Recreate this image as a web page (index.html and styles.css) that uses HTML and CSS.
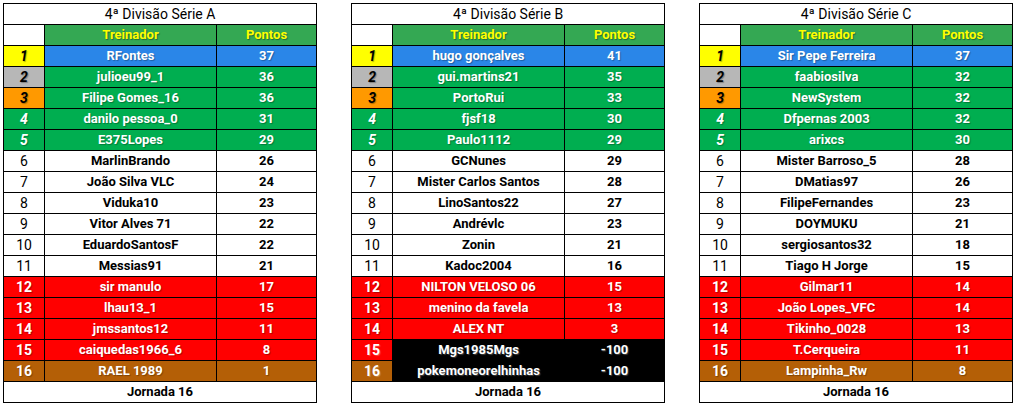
FILE: index.html
```html
<!DOCTYPE html>
<html lang="pt">
<head>
<meta charset="utf-8">
<title>4ª Divisão</title>
<link rel="stylesheet" href="styles.css">
</head>
<body>
<div class="wrap">
  <table class="league">
    <colgroup><col class="c-rank"><col class="c-name"><col class="c-pts"></colgroup>
    <tr><td colspan="3" class="title">4ª Divisão Série A</td></tr>
    <tr class="head"><td class="blank"></td><td>Treinador</td><td>Pontos</td></tr>
    <tr class="blue"><td class="r r1">1</td><td>RFontes</td><td>37</td></tr>
    <tr class="green"><td class="r r2">2</td><td>julioeu99_1</td><td>36</td></tr>
    <tr class="green"><td class="r r3">3</td><td>Filipe Gomes_16</td><td>36</td></tr>
    <tr class="green"><td class="r r4">4</td><td>danilo pessoa_0</td><td>31</td></tr>
    <tr class="green"><td class="r r4">5</td><td>E375Lopes</td><td>29</td></tr>
    <tr class="white"><td class="r">6</td><td>MarlinBrando</td><td>26</td></tr>
    <tr class="white"><td class="r">7</td><td>João Silva VLC</td><td>24</td></tr>
    <tr class="white"><td class="r">8</td><td>Viduka10</td><td>23</td></tr>
    <tr class="white"><td class="r">9</td><td>Vitor Alves 71</td><td>22</td></tr>
    <tr class="white"><td class="r">10</td><td>EduardoSantosF</td><td>22</td></tr>
    <tr class="white"><td class="r">11</td><td>Messias91</td><td>21</td></tr>
    <tr class="red"><td class="r">12</td><td>sir manulo</td><td>17</td></tr>
    <tr class="red"><td class="r">13</td><td>lhau13_1</td><td>15</td></tr>
    <tr class="red"><td class="r">14</td><td>jmssantos12</td><td>11</td></tr>
    <tr class="red"><td class="r">15</td><td>caiquedas1966_6</td><td>8</td></tr>
    <tr class="brown"><td class="r">16</td><td>RAEL 1989</td><td>1</td></tr>
    <tr><td colspan="3" class="foot">Jornada 16</td></tr>
  </table>

  <table class="league">
    <colgroup><col class="c-rank"><col class="c-name"><col class="c-pts"></colgroup>
    <tr><td colspan="3" class="title">4ª Divisão Série B</td></tr>
    <tr class="head"><td class="blank"></td><td>Treinador</td><td>Pontos</td></tr>
    <tr class="blue"><td class="r r1">1</td><td>hugo gonçalves</td><td>41</td></tr>
    <tr class="green"><td class="r r2">2</td><td>gui.martins21</td><td>35</td></tr>
    <tr class="green"><td class="r r3">3</td><td>PortoRui</td><td>33</td></tr>
    <tr class="green"><td class="r r4">4</td><td>fjsf18</td><td>30</td></tr>
    <tr class="green"><td class="r r4">5</td><td>Paulo1112</td><td>29</td></tr>
    <tr class="white"><td class="r">6</td><td>GCNunes</td><td>29</td></tr>
    <tr class="white"><td class="r">7</td><td>Mister Carlos Santos</td><td>28</td></tr>
    <tr class="white"><td class="r">8</td><td>LinoSantos22</td><td>27</td></tr>
    <tr class="white"><td class="r">9</td><td>Andrévlc</td><td>23</td></tr>
    <tr class="white"><td class="r">10</td><td>Zonin</td><td>21</td></tr>
    <tr class="white"><td class="r">11</td><td>Kadoc2004</td><td>16</td></tr>
    <tr class="red"><td class="r">12</td><td>NILTON VELOSO 06</td><td>15</td></tr>
    <tr class="red"><td class="r">13</td><td>menino da favela</td><td>13</td></tr>
    <tr class="red"><td class="r">14</td><td>ALEX NT</td><td>3</td></tr>
    <tr class="black red-rank"><td class="r">15</td><td>Mgs1985Mgs</td><td>-100</td></tr>
    <tr class="black brown-rank"><td class="r">16</td><td>pokemoneorelhinhas</td><td>-100</td></tr>
    <tr><td colspan="3" class="foot">Jornada 16</td></tr>
  </table>

  <table class="league">
    <colgroup><col class="c-rank"><col class="c-name"><col class="c-pts"></colgroup>
    <tr><td colspan="3" class="title">4ª Divisão Série C</td></tr>
    <tr class="head"><td class="blank"></td><td>Treinador</td><td>Pontos</td></tr>
    <tr class="blue"><td class="r r1">1</td><td>Sir Pepe Ferreira</td><td>37</td></tr>
    <tr class="green"><td class="r r2">2</td><td>faabiosilva</td><td>32</td></tr>
    <tr class="green"><td class="r r3">3</td><td>NewSystem</td><td>32</td></tr>
    <tr class="green"><td class="r r4">4</td><td>Dfpernas 2003</td><td>32</td></tr>
    <tr class="green"><td class="r r4">5</td><td>arixcs</td><td>30</td></tr>
    <tr class="white"><td class="r">6</td><td>Mister Barroso_5</td><td>28</td></tr>
    <tr class="white"><td class="r">7</td><td>DMatias97</td><td>26</td></tr>
    <tr class="white"><td class="r">8</td><td>FilipeFernandes</td><td>23</td></tr>
    <tr class="white"><td class="r">9</td><td>DOYMUKU</td><td>21</td></tr>
    <tr class="white"><td class="r">10</td><td>sergiosantos32</td><td>18</td></tr>
    <tr class="white"><td class="r">11</td><td>Tiago H Jorge</td><td>15</td></tr>
    <tr class="red"><td class="r">12</td><td>Gilmar11</td><td>14</td></tr>
    <tr class="red"><td class="r">13</td><td>João Lopes_VFC</td><td>14</td></tr>
    <tr class="red"><td class="r">14</td><td>Tikinho_0028</td><td>13</td></tr>
    <tr class="red"><td class="r">15</td><td>T.Cerqueira</td><td>11</td></tr>
    <tr class="brown"><td class="r">16</td><td>Lampinha_Rw</td><td>8</td></tr>
    <tr><td colspan="3" class="foot">Jornada 16</td></tr>
  </table>
</div>
</body>
</html>
```

FILE: styles.css
```css
html, body {
  margin: 0;
  padding: 0;
  background: #ffffff;
}

.wrap {
  display: flex;
  gap: 34px;
  padding: 3px;
  align-items: flex-start;
}

.league {
  border-collapse: collapse;
  table-layout: fixed;
  width: 313px;
  font-family: Roboto, "Liberation Sans", Arial, sans-serif;
  font-size: 13px;
  font-weight: bold;
  color: #000;
}

.c-rank { width: 41px; }
.c-name { width: 172px; }
.c-pts { width: 100px; }

.league td {
  border: 1px solid #000;
  height: 20px;
  padding: 0;
  text-align: center;
  vertical-align: middle;
  line-height: 16px;
  white-space: nowrap;
  overflow: hidden;
}

.league tr { height: 21px; }

.league td.title {
  font-weight: normal;
  font-size: 14px;
  background: #fff;
}

.league td.foot {
  background: #fff;
  font-size: 13px;
}

.head td {
  background: #34a853;
  color: #ffff00;
  text-shadow: 1px 1px 1px rgba(0, 0, 0, 0.35);
}

.head td.blank { background: #fff; }

.blue td { background: #2a86e8; color: #fff; text-shadow: 1px 1px 1px rgba(0,0,0,0.3); }
.green td { background: #00ae50; color: #fff; text-shadow: 1px 1px 1px rgba(0,0,0,0.3); }
.red td { background: #ff0000; color: #fff; text-shadow: 1px 1px 1px rgba(0,0,0,0.3); }
.brown td { background: #b45f06; color: #fff; text-shadow: 1px 1px 1px rgba(0,0,0,0.3); }
.black td { background: #000; color: #fff; text-shadow: 1px 1px 1px rgba(255,255,255,0.25); }
.white td { background: #fff; color: #000; }

.league td.r { font-size: 14px; }
.white td.r { font-weight: normal; }

.league td.r1, .league td.r2, .league td.r3, .league td.r4 { font-style: italic; }
.league td.r1 { background: #ffff00; color: #000; text-shadow: 1px 1px 1px rgba(0,0,0,0.3); }
.league td.r2 { background: #b7b7b7; color: #000; }
.league td.r3 { background: #ff9900; color: #000; }

.red-rank td.r { background: #ff0000; }
.brown-rank td.r { background: #b45f06; }
```
